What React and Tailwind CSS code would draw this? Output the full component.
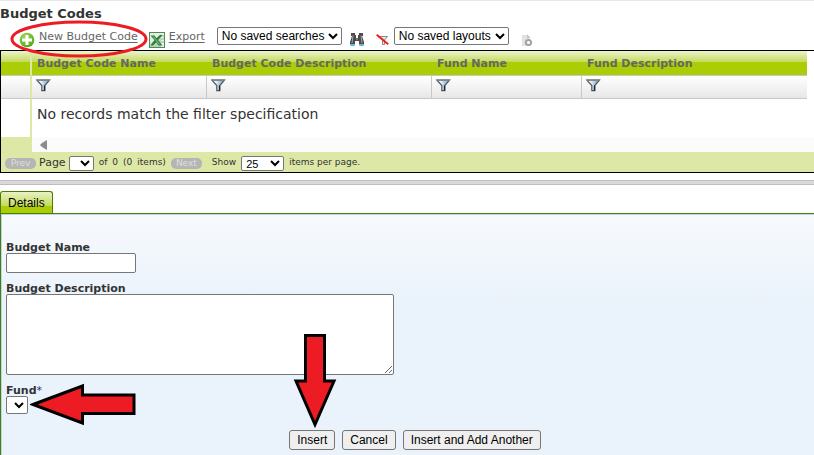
import React, { useState } from "react";

const columns = ["Budget Code Name", "Budget Code Description", "Fund Name", "Fund Description"];

const verdana = "font-['DejaVu_Sans',Verdana,sans-serif]";
const arial = "font-['Liberation_Sans',Arial,sans-serif]";
const box = "border border-[#767676] bg-white text-black";

const AddIcon = () => (
  <svg width="16" height="16" viewBox="0 0 16 16">
    <defs>
      <radialGradient id="add" cx="40%" cy="30%" r="75%">
        <stop offset="0" stopColor="#a5dc5c" />
        <stop offset="1" stopColor="#4da50f" />
      </radialGradient>
    </defs>
    <circle cx="8" cy="8" r="7.3" fill="url(#add)" />
    <path d="M6.5 3h3v3.5H13v3H9.5V13h-3V9.5H3v-3h3.5z" fill="#fff" />
  </svg>
);

const ExcelIcon = () => (
  <svg width="16" height="16" viewBox="0 0 16 16">
    <rect x="0.5" y="0.5" width="15" height="15" fill="#b9d3b6" stroke="#4d8a55" />
    <rect x="12" y="1" width="3" height="14" fill="#e7f1e5" />
    <path d="M1 1h12L1 12z" fill="#e3efe1" />
    <path d="M12 4h3M12 7h3M12 10h3" stroke="#8fb58f" />
    <path d="M1.5 3.5h4l2 2.800 3.500-3.300h2.500L9 8l4.500 5.500h-4L7.200 10.300 4 13.500H1.500L5.500 8.300z" fill="#2d7a3c" />
    <path d="M3 4.500h2L11.500 12.500h-2z" fill="#6cab6d" />
  </svg>
);

const FindIcon = () => (
  <svg width="14" height="14" viewBox="0 0 14 14">
    <path d="M1 0h4v2h1v3h2V2h1V0h4v3h-1l2 6v3H9V8H5v4H0V9l2-6H1z" fill="#4b4b4b" />
    <path d="M3 2.500L2 10M11 2.500l1 7.500M6 6h2" stroke="#a9a9a9" />
    <path d="M0 11h5v1.500a3 1.500 0 0 1-5 0zM9 11h5v1.500a3 1.500 0 0 1-5 0z" fill="#6db3e0" />
  </svg>
);

const ClearFilterIcon = () => (
  <svg width="13" height="12" viewBox="0 0 13 12">
    <path d="M2.500 2.500h9L8.500 6v4.500h-2V6z" fill="#e4e4e4" stroke="#8a8a8a" />
    <path d="M.7.700l11.500 9.500" stroke="#f31818" strokeWidth="1.800" />
  </svg>
);

const LayoutIcon = () => (
  <svg width="11" height="13" viewBox="0 0 11 13">
    <path d="M0 1h5l3 3v8H0z" fill="#e2e2e2" />
    <path d="M5 0l3.500 4H5z" fill="#c4c4c4" />
    <circle cx="6.500" cy="8.500" r="2.600" fill="#fff" stroke="#a3a3a3" strokeWidth="2" />
  </svg>
);

const FilterIcon = () => (
  <svg width="15" height="13" viewBox="0 0 15 13" className="block">
    <defs>
      <linearGradient id="funnel">
        <stop offset="0.200" stopColor="#fff" />
        <stop offset="0.800" stopColor="#86b3dc" />
      </linearGradient>
    </defs>
    <path d="M1 1.200h12.500L8.800 6.500v5.200H5.800V6.500z" fill="url(#funnel)" stroke="#50565e" strokeWidth="1.200" />
    <path d="M.5 1h13.500" stroke="#8b8b8b" strokeWidth="1.500" />
    <path d="M8.500 6.500v5.200" stroke="#222" strokeWidth="1.300" />
  </svg>
);

const PagerButton = ({ children }) => (
  <button type="button" disabled className="h-[11px] w-[31px] rounded-[5px] bg-[#b5b5b5] text-[9px] leading-[11px] text-[#dedede]">
    {children}
  </button>
);

const FormButton = ({ children }) => (
  <button type="button" className="h-5 rounded-[3px] border border-[#767676] bg-[#efefef] px-[7px] text-[12px] leading-[18px] text-black">
    {children}
  </button>
);

const App = () => {
  const [name, setName] = useState("");
  const [description, setDescription] = useState("");

  return (
    <div className={`flex min-h-screen flex-col overflow-hidden border-t border-[#e8e8e8] bg-white text-[11px] text-[#333] ${verdana}`}>
      <h1 className="pt-[5px] text-[13px] leading-4 font-bold">Budget Codes</h1>

      {/* Toolbar */}
      <div className="flex h-7 items-start pt-[5px] pl-[19px] leading-5 text-[#666]">
        <div className="relative flex items-start gap-1">
          <div className="pt-[5px]"><AddIcon /></div>
          <a href="#new" className="underline underline-offset-2">New Budget Code</a>
          <svg width="140" height="40" viewBox="0 0 140 40" className="pointer-events-none absolute -top-2 -left-[10px] z-10 max-w-none">
            <ellipse cx="70" cy="20" rx="67" ry="17" fill="none" stroke="#ed1c24" strokeWidth="3" />
          </svg>
        </div>
        <div className="ml-[11px] flex items-start gap-1">
          <div className="pt-[5px]"><ExcelIcon /></div>
          <a href="#export" className="underline underline-offset-2">Export</a>
        </div>
        <select aria-label="Saved searches" className={`ml-3 h-[18px] w-[125px] rounded-[2px] text-[12px] ${box} ${arial}`}>
          <option>No saved searches</option>
        </select>
        <button type="button" aria-label="Search" className="ml-2 pt-[6px]"><FindIcon /></button>
        <button type="button" aria-label="Clear filter" className="ml-3 pt-[7px]"><ClearFilterIcon /></button>
        <select aria-label="Saved layouts" className={`ml-[5px] h-[18px] w-[115px] rounded-[2px] text-[12px] ${box} ${arial}`}>
          <option>No saved layouts</option>
        </select>
        <button type="button" aria-label="Save layout" className="ml-[13px] pt-[7px]"><LayoutIcon /></button>
      </div>

      {/* Grid */}
      <section className="border-y border-l border-black">
        <div className="pr-[7px]">
          <table className="w-full table-fixed border-separate border-spacing-0 text-left">
            <colgroup>
              <col className="w-[31px]" />
              <col className="w-[175px]" />
              <col className="w-[225px]" />
              <col className="w-[150px]" />
              <col />
            </colgroup>
            <thead>
              <tr className="bg-[linear-gradient(#ecf3ce_0px,#c3da5a_11px,#abcd05_11px)]">
                <th className="h-[25px] border-r-2 border-b border-r-[#dde8a7] border-b-[#c8c8c8] p-0" />
                {columns.map((column) => (
                  <th key={column} className="border-b border-[#c8c8c8] p-0 pt-px pl-[5px] leading-[23px] font-bold whitespace-nowrap text-[#666]">
                    {column}
                  </th>
                ))}
              </tr>
              <tr className="bg-linear-to-b from-white to-[#e6e6e6]">
                <td className="h-[23px] border-r-2 border-b border-r-[#dde8a7] border-b-[#c8c8c8] p-0" />
                {columns.map((column) => (
                  <td key={column} className="border-r border-b border-[#c8c8c8] p-0 pb-1 pl-1 last:border-r-0">
                    <button type="button" aria-label={`Filter ${column}`} className="block"><FilterIcon /></button>
                  </td>
                ))}
              </tr>
            </thead>
            <tbody>
              <tr>
                <td className="h-[38px] border-r-2 border-[#dde8a7] p-0" />
                <td colSpan={4} className="p-0 pb-[9px] pl-[5px] text-[14px] leading-5">
                  No records match the filter specification
                </td>
              </tr>
            </tbody>
          </table>
        </div>
        <div className="bg-[#dde8a7] pl-[31px]">
          <div className="flex h-[15px] items-center bg-[#fbfbfb] pl-2">
            <svg width="7" height="10" viewBox="0 0 7 10">
              <path d="M7 0v10L2 7 0 5l2-2z" fill="#8b8b8b" />
            </svg>
          </div>
        </div>
        <div className="flex h-5 items-center bg-[#dde8a7] pt-0.5 pl-1 text-[9px]">
          <PagerButton>Prev</PagerButton>
          <label htmlFor="page" className="ml-[3px] text-[11px]">Page</label>
          <select id="page" className={`ml-[3px] h-[15px] w-[25px] rounded-[2px] ${box} ${arial}`} />
          <div className="mx-[5px] flex gap-[5px]">
            <span>of</span>
            <span>0</span>
            <span>(0</span>
            <span>items)</span>
          </div>
          <PagerButton>Next</PagerButton>
          <label htmlFor="size" className="ml-[10px]">Show</label>
          <select id="size" defaultValue="25" className={`mx-[5px] h-[15px] w-[43px] rounded-[2px] text-[11px] leading-[13px] ${box} ${arial}`}>
            <option>25</option>
            <option>50</option>
          </select>
          <span>items per page.</span>
        </div>
      </section>

      <div className="mt-[7px] h-[5px] shrink-0 border-y border-[#bdbdbd] bg-[#d9d9d9]" />

      {/* Details */}
      <div className={`mt-[6px] flex ${arial}`}>
        <button type="button" className="h-[22px] rounded-t-[3px] border border-b-0 border-[#4e7c00] bg-[linear-gradient(#e9f2c4_0px,#c3da5a_14px,#abcd05_14px)] px-[7px] text-[12px] text-black">
          Details
        </button>
      </div>
      <form className="flex flex-1 flex-col border-t border-l border-[#4e7c00]">
        <div className="flex flex-1 flex-col items-start border-t border-l border-[#b5d8ee] bg-[linear-gradient(#f7fafd_0px,#eaf2fb_90px)] pt-[28px] pl-1">
          <label htmlFor="name" className="leading-[10px] font-bold">Budget Name</label>
          <input id="name" value={name} onChange={(e) => setName(e.target.value)} className={`h-5 w-[130px] rounded-[2px] px-1 ${box}`} />
          <label htmlFor="description" className="mt-[11px] leading-[10px] font-bold">Budget Description</label>
          <textarea id="description" value={description} onChange={(e) => setDescription(e.target.value)} className={`h-[81px] w-[388px] resize rounded-[2px] px-1 ${box}`} />
          <label htmlFor="fund" className="mt-[11px] leading-[10px] font-bold">
            Fund<span className="font-normal text-[#2b2b8c]">*</span>
          </label>
          <div className="relative">
            <select id="fund" className={`block h-[18px] w-[22px] rounded-[2px] ${box} ${arial}`} />
            <svg width="108" height="44" viewBox="0 0 108 44" className="pointer-events-none absolute -top-[13px] left-6 max-w-none">
              <path d="M3 21.500L52.500 3v9h51.500v18.500H52.500v9.500z" fill="#ed1c24" stroke="#000" strokeWidth="3" />
            </svg>
          </div>
          <div className={`flex gap-[7px] self-center pt-4 pb-1 pl-[10px] ${arial}`}>
            <div className="relative">
              <FormButton>Insert</FormButton>
              <svg width="44" height="96" viewBox="0 0 44 96" className="pointer-events-none absolute -top-[97px] left-1 max-w-none">
                <path d="M12.500 2.500h19V48H41L22 91.500 3 48h9.500z" fill="#ed1c24" stroke="#000" strokeWidth="3" />
              </svg>
            </div>
            <FormButton>Cancel</FormButton>
            <FormButton>Insert and Add Another</FormButton>
          </div>
        </div>
      </form>
    </div>
  );
};

export default App;
